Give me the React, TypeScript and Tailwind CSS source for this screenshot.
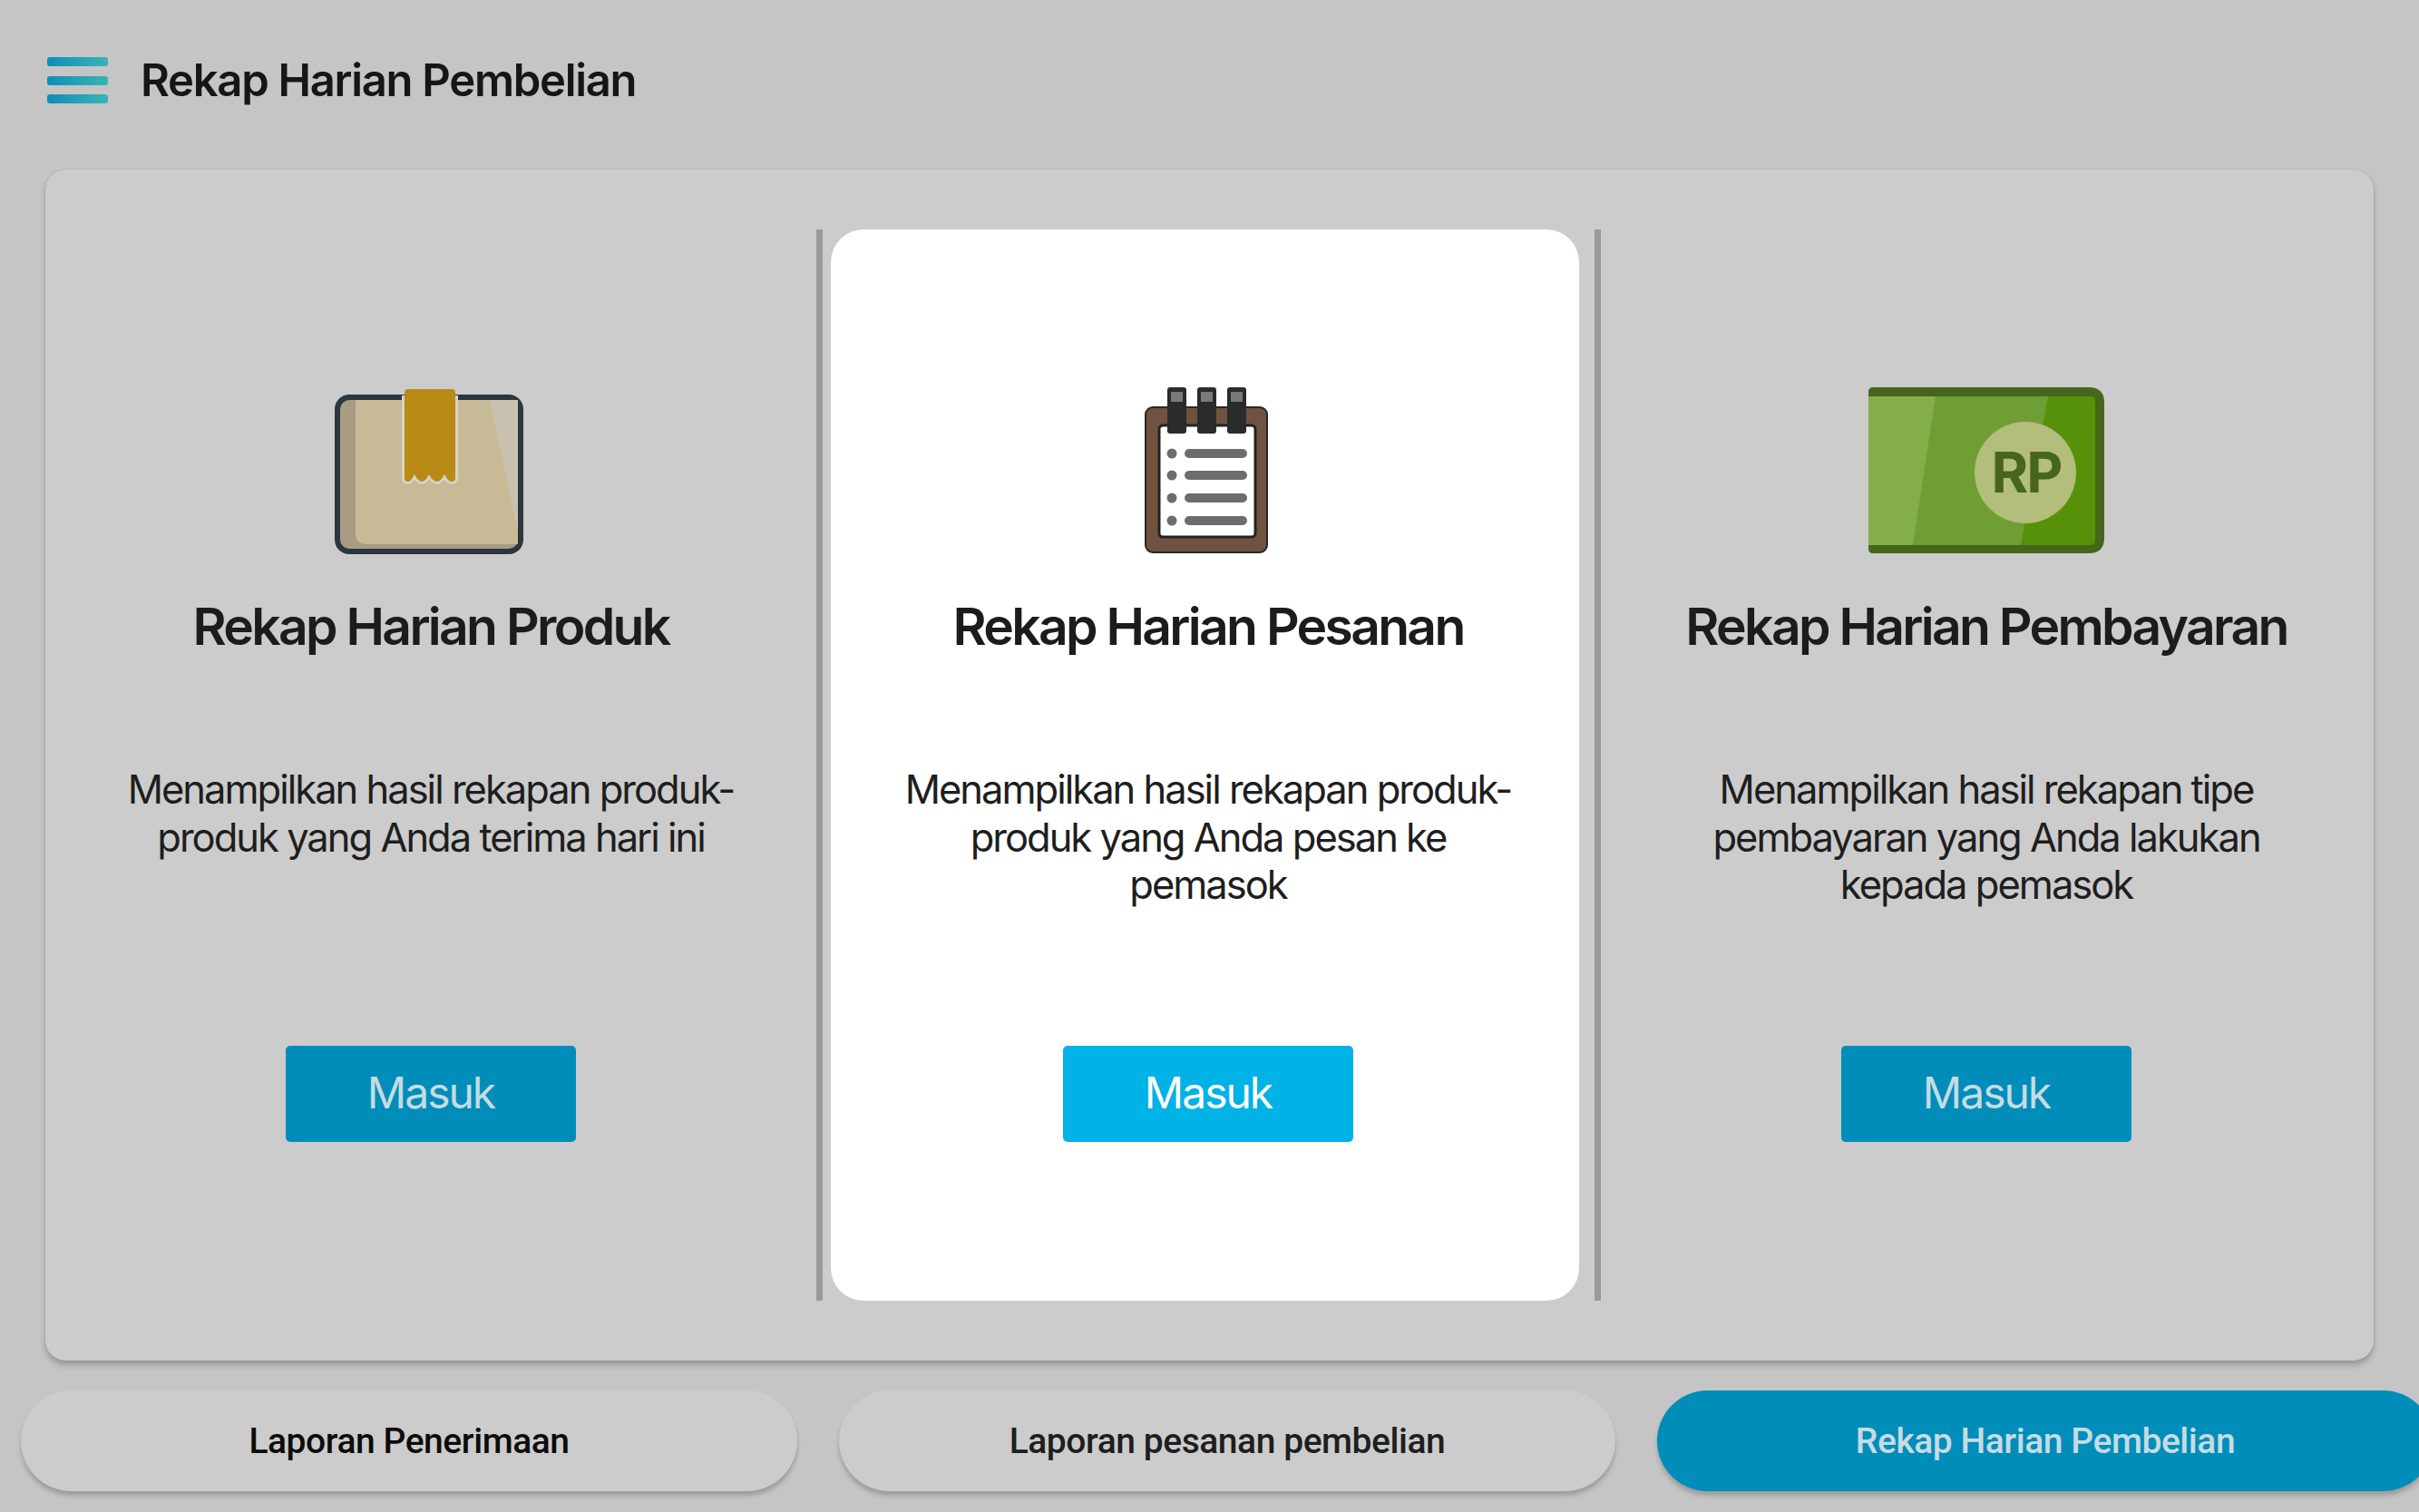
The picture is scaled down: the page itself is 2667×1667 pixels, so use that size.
const COLUMNS = [
  {
    title: "Rekap Harian Produk",
    lines: ["Menampilkan hasil rekapan produk-", "produk yang Anda terima hari ini"],
    icon: "box",
  },
  {
    title: "Rekap Harian Pesanan",
    lines: ["Menampilkan hasil rekapan produk-", "produk yang Anda pesan ke", "pemasok"],
    icon: "notes",
    active: true,
  },
  {
    title: "Rekap Harian Pembayaran",
    lines: ["Menampilkan hasil rekapan tipe", "pembayaran yang Anda lakukan", "kepada pemasok"],
    icon: "money",
  },
];

const TABS = [
  { label: "Laporan Penerimaan", className: "bg-[#cccccc] text-[#0c0c0c]" },
  { label: "Laporan pesanan pembelian", className: "bg-[#cccccc] text-[#1e1e1e]" },
  { label: "Rekap Harian Pembelian", className: "bg-[#008dba] text-[#c6dbe2]" },
];

const RIBBON =
  "M446 433Q446 429 450 429H498Q502 429 502 433V527Q502 531 498 531Q494 531 490 523Q486 531 482 531Q477 531 473 523Q469 531 465 531Q461 531 457 523Q453 531 450 531Q446 531 446 527Z";

function BoxIcon() {
  return (
    <svg width="208" height="184" viewBox="369 427 208 184" className="mr-[4px]">
      <rect x="372" y="438" width="202" height="170" rx="13" fill="#a89c83" stroke="#2b3640" strokeWidth="6" />
      <path d="M392 441H571V600H404Q392 600 392 588Z" fill="#c8b997" />
      <path d="M540 441H571V586Z" fill="#c9c2b1" />
      <path d="M442 441H506V536H442Z" fill="none" />
      <path d={RIBBON} fill="none" stroke="#d8d4c6" strokeWidth="6" />
      <path d="M441 428H507V436H441Z" fill="#2b3640" />
      <path d="M441 425H507V435H441Z" fill="#cccccc" />
      <path d={RIBBON} fill="#b98a14" />
    </svg>
  );
}

function NotesIcon() {
  return (
    <svg width="136" height="184" viewBox="1262 427 136 184" className="mr-[4px]">
      <rect x="1263" y="449" width="134" height="160" rx="8" fill="#6f5240" stroke="#2a2622" strokeWidth="2" />
      <rect x="1278" y="469" width="106" height="123" rx="4" fill="#ffffff" stroke="#222222" strokeWidth="3" />
      {[1287, 1320, 1353].map((x) => (
        <g key={x}>
          <rect x={x} y="427" width="21" height="51" rx="3" fill="#2b2b2b" />
          <rect x={x + 4} y="432" width="13" height="11" fill="#7a7a7a" />
        </g>
      ))}
      {[500, 524, 549, 574].map((y) => (
        <g key={y} fill="#6d6d6d">
          <circle cx="1292" cy={y} r="5.5" />
          <rect x="1306" y={y - 5} width="69" height="10" rx="5" />
        </g>
      ))}
    </svg>
  );
}

function MoneyIcon() {
  return (
    <svg width="260" height="184" viewBox="2059 427 260 184">
      <path d="M2059 432Q2059 427 2064 427H2302Q2319 427 2319 444V593Q2319 610 2302 610H2064Q2059 610 2059 605Z" fill="#46661c" />
      <path d="M2059 437H2304Q2309 437 2309 442V596Q2309 601 2304 601H2059Z" fill="#579109" />
      <path d="M2059 437H2257L2227 601H2059Z" fill="#6f9e34" />
      <path d="M2059 437H2133L2108 601H2059Z" fill="#84ae4a" />
      <circle cx="2232" cy="521" r="56" fill="#b3bd7c" />
      <text x="2233" y="543" textAnchor="middle" fill="#46661c" className="font-['Inter'] text-[62px] font-bold tracking-[-2px]">
        RP
      </text>
    </svg>
  );
}

function ColumnIcon({ name }: { name: string }) {
  if (name === "box") return <BoxIcon />;
  if (name === "notes") return <NotesIcon />;
  return <MoneyIcon />;
}

function Column({ title, lines, icon, active }: { title: string; lines: string[]; icon: string; active?: boolean }) {
  return (
    <div
      className={
        active
          ? "ml-[9px] mr-[17px] flex w-[825px] shrink-0 flex-col items-center rounded-[36px] bg-white pl-[7px] pt-[174px]"
          : "flex w-[850px] shrink-0 flex-col items-center pt-[174px]"
      }
    >
      <div className="flex h-[184px] items-start justify-center">
        <ColumnIcon name={icon} />
      </div>
      <h2 className="mt-[45px] h-[70px] text-[57px] font-semibold leading-[70px] tracking-[-2.7px] text-[#1c1c1c]">
        {title}
      </h2>
      <p className="mt-[118px] h-[158px] text-center text-[43.5px] leading-[52.5px] tracking-[-2px] text-[#1e1e1e]">
        {lines.map((line) => (
          <span key={line} className="block">
            {line}
          </span>
        ))}
      </p>
      <button
        className={
          active
            ? "mt-[151px] h-[106px] w-[320px] rounded-[5px] bg-[#00b2e6] pb-[2px] text-[48px] tracking-[-2px] text-white"
            : "mt-[151px] h-[106px] w-[320px] rounded-[5px] bg-[#008dba] pb-[2px] text-[48px] tracking-[-2px] text-[#c6dbe2]"
        }
      >
        Masuk
      </button>
    </div>
  );
}

export default function App() {
  return (
    <div className="h-[1667px] w-[2667px] overflow-hidden bg-[#c5c5c5] font-['Inter',sans-serif]">
      <header className="flex h-[187px] items-start pl-[52px] pt-[63px]">
        <div className="flex h-[51px] w-[67px] flex-col justify-between">
          <div className="h-[10px] rounded-[3px] bg-linear-to-r from-[#0a8fb8] to-[#38b4b4]" />
          <div className="h-[10px] rounded-[3px] bg-linear-to-r from-[#0a8fb8] to-[#38b4b4]" />
          <div className="h-[10px] rounded-[3px] bg-linear-to-r from-[#0a8fb8] to-[#38b4b4]" />
        </div>
        <h1 className="ml-[36px] mt-[1px] text-[49px] font-semibold leading-[50px] tracking-[-1.3px] text-[#161616]">
          Rekap Harian Pembelian
        </h1>
      </header>

      <main className="mx-[50px] flex h-[1313px] w-[2567px] rounded-[22px] bg-[#cccccc] py-[66px] shadow-[0_5px_6px_rgba(0,0,0,0.22),0_0_2px_rgba(0,0,0,0.15)]">
        <Column {...COLUMNS[0]} />
        <div className="w-[7px] shrink-0 bg-[#9a9a9a]" />
        <Column {...COLUMNS[1]} />
        <div className="w-[7px] shrink-0 bg-[#9a9a9a]" />
        <Column {...COLUMNS[2]} />
      </main>

      <nav className="mt-[33px] flex gap-[46px] pl-[23px]">
        {TABS.map((tab) => (
          <div
            key={tab.label}
            className={`flex h-[111px] w-[856px] shrink-0 items-center justify-center rounded-full pt-[2px] font-['Roboto'] text-[39px] font-medium tracking-[-0.45px] shadow-[0_5px_5px_rgba(0,0,0,0.2)] ${tab.className}`}
          >
            {tab.label}
          </div>
        ))}
      </nav>
    </div>
  );
}
